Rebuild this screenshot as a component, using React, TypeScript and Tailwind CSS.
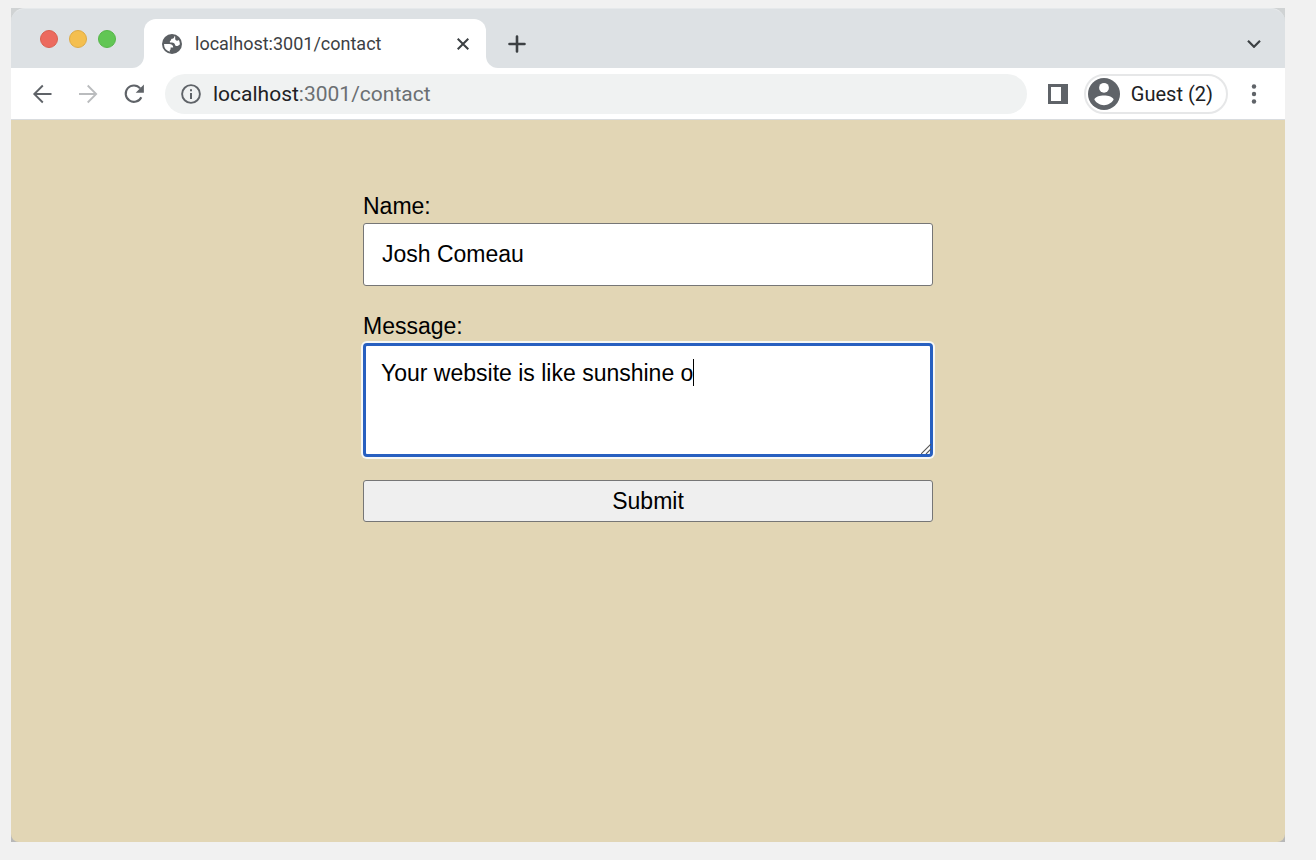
import React, { useState } from "react";

function GlobeIcon() {
  return (
    <svg className="size-5 shrink-0" viewBox="0 0 20 20" aria-hidden="true">
      <circle cx="10" cy="10" r="10" fill="#5b5f63" />
      <path
        d="M2 10h5.200c2.600 0 4 1.300 4 3.500H8.600v1.800c0 .5-.3.8-.8.8v1.600A8 8 0 0 1 2 10Z M12.300 2.300c0 1.700-.7 2.400-2 2.500-.8 0-1.200.3-1.200 1s-.5 1-1.200 1.100v1.700h2c1.900 0 2.900.9 3.200 2.500.1.600.6.900 1.200.9h.9c.8 0 1.400-.4 1.700-1.100l1-.3a8 8 0 0 0-1.100-4.700c-.4.500-1 .800-1.700.8-1.300 0-1.900-.8-1.900-1.900V2.400Z"
        fill="#fff"
      />
    </svg>
  );
}

function BackIcon() {
  return (
    <svg className="size-5" viewBox="0 0 20 20" fill="none" stroke="currentColor" strokeWidth="1.9" aria-hidden="true">
      <path d="M19.500 10H2.500M10.800 1.500 2.300 10l8.500 8.500" />
    </svg>
  );
}

function ForwardIcon() {
  return (
    <svg className="size-5" viewBox="0 0 20 20" fill="none" stroke="currentColor" strokeWidth="1.800" aria-hidden="true">
      <path d="M1 10H18M9.700 1.500l8.500 8.500-8.500 8.500" />
    </svg>
  );
}

function ReloadIcon() {
  return (
    <svg className="size-5" viewBox="0 0 20 20" fill="none" aria-hidden="true">
      <path d="M17.300 13.200A8.200 8.200 0 1 1 16.200 4.400" stroke="currentColor" strokeWidth="2.100" />
      <path d="M19.900.5v8.200h-8.200z" fill="currentColor" />
    </svg>
  );
}

function InfoIcon() {
  return (
    <svg className="size-5 shrink-0" viewBox="0 0 20 20" fill="none" aria-hidden="true">
      <circle cx="10" cy="10" r="8.900" stroke="#5f6368" strokeWidth="1.900" />
      <path d="M9 9h2v6H9zM9 5.200h2v2H9z" fill="#5f6368" />
    </svg>
  );
}

function CloseIcon() {
  return (
    <svg className="size-3" viewBox="0 0 12 12" stroke="currentColor" strokeWidth="2" aria-hidden="true">
      <path d="m.7.700 10.600 10.600M11.300.700.700 11.300" />
    </svg>
  );
}

function PlusIcon() {
  return (
    <svg className="size-[18px]" viewBox="0 0 18 18" stroke="currentColor" strokeWidth="2.600" strokeLinecap="round" aria-hidden="true">
      <path d="M9 1.500v15M1.500 9h15" />
    </svg>
  );
}

function ChevronIcon() {
  return (
    <svg className="h-2 w-[14px]" viewBox="0 0 14 8" fill="none" stroke="currentColor" strokeWidth="2.200" aria-hidden="true">
      <path d="m1 .8 6 6 6-6" />
    </svg>
  );
}

function SidePanelIcon() {
  return (
    <svg className="size-5" viewBox="0 0 20 20" aria-hidden="true">
      <path d="M0 0h20v20H0zM3 3v14h10V3z" fill="#5f6368" fillRule="evenodd" />
    </svg>
  );
}

function AvatarIcon() {
  return (
    <svg className="size-8" viewBox="0 0 32 32" aria-hidden="true">
      <circle cx="16" cy="16" r="16" fill="#5f6368" />
      <circle cx="16" cy="9.800" r="4.900" fill="#fff" />
      <path d="M6.400 21.800C6.400 18.800 12 17.400 16 17.400s9.600 1.400 9.600 4.400c-1.900 3.100-5.400 5.400-9.600 5.400s-7.700-2.300-9.600-5.400Z" fill="#fff" />
    </svg>
  );
}

function MenuIcon() {
  return (
    <svg className="h-5 w-1.5" viewBox="0 0 6 20" fill="#5f6368" aria-hidden="true">
      <circle cx="3" cy="2.500" r="2.200" />
      <circle cx="3" cy="10" r="2.200" />
      <circle cx="3" cy="17.500" r="2.200" />
    </svg>
  );
}

function TabStrip() {
  return (
    <div className="flex h-[60px] items-end rounded-t-[14px] border-t border-[#e6e9eb] bg-[#dde1e4]">
      <div className="flex h-full items-center gap-[11px] pl-[29px]">
        <button type="button" aria-label="Close window" className="size-[18px] rounded-full border border-[#d9604f] bg-[#ec6a5e]" />
        <button type="button" aria-label="Minimize window" className="size-[18px] rounded-full border border-[#deab45] bg-[#f4bf4f]" />
        <button type="button" aria-label="Zoom window" className="size-[18px] rounded-full border border-[#56b649] bg-[#61c654]" />
      </div>
      <div className="h-3 w-7 bg-white">
        <div className="h-full rounded-br-[12px] bg-[#dde1e4]" />
      </div>
      <div className="flex h-[49px] w-[342px] items-center rounded-t-[12px] bg-white pl-[18px] pr-[17px]">
        <GlobeIcon />
        <span className="ml-[13px] flex-1 text-[18px] leading-6 text-[#3c4043]">localhost:3001/contact</span>
        <button type="button" aria-label="Close tab" className="text-[#3c4043]">
          <CloseIcon />
        </button>
      </div>
      <div className="h-3 w-3 bg-white">
        <div className="h-full rounded-bl-[12px] bg-[#dde1e4]" />
      </div>
      <div className="flex h-[49px] flex-1 items-center justify-between pl-2.5 pr-6 text-[#3c4043]">
        <button type="button" aria-label="New tab">
          <PlusIcon />
        </button>
        <button type="button" aria-label="Search tabs">
          <ChevronIcon />
        </button>
      </div>
    </div>
  );
}

function Toolbar() {
  return (
    <div className="flex h-[52px] items-center border-b border-[#d9dcdf] bg-white pl-[21px] pr-7 text-[#5f6368]">
      <div className="flex gap-[26px]">
        <button type="button" aria-label="Back">
          <BackIcon />
        </button>
        <button type="button" aria-label="Forward" className="text-[#babcbe]">
          <ForwardIcon />
        </button>
        <button type="button" aria-label="Reload">
          <ReloadIcon />
        </button>
      </div>
      <div className="ml-[21px] flex h-10 flex-1 items-center gap-3 rounded-full bg-[#f0f2f2] px-4">
        <InfoIcon />
        <a href="#contact" className="text-[21px] leading-7 text-[#6b6f72]">
          <span className="text-[#202124]">localhost</span>:3001/contact
        </a>
      </div>
      <button type="button" aria-label="Side panel" className="ml-[21px]">
        <SidePanelIcon />
      </button>
      <button
        type="button"
        className="ml-4 flex h-10 items-center gap-[11px] rounded-full border-2 border-[#e6e7e8] pl-0.5 pr-[13px] text-[20px] leading-6 text-[#202124]"
      >
        <AvatarIcon />
        Guest (2)
      </button>
      <button type="button" aria-label="Menu" className="ml-[23px]">
        <MenuIcon />
      </button>
    </div>
  );
}

function ContactForm() {
  const [name, setName] = useState("Josh Comeau");
  const [message, setMessage] = useState("Your website is like sunshine o");

  return (
    <form
      id="contact"
      onSubmit={(event: React.FormEvent) => event.preventDefault()}
      className="flex w-full max-w-[570px] flex-col gap-[23px] font-['Liberation_Sans',Arial,sans-serif] text-[23px] text-black"
    >
      <div className="flex flex-col">
        <label htmlFor="name" className="leading-[34px]">
          Name:
        </label>
        <input
          id="name"
          type="text"
          value={name}
          onChange={(event) => setName(event.target.value)}
          className="h-[63px] rounded-[3px] border border-[#767676] bg-white px-[18px]"
        />
      </div>
      <div className="flex flex-col">
        <label htmlFor="message" className="leading-[34px]">
          Message:
        </label>
        <div className="relative flex">
          <textarea
            id="message"
            value={message}
            onChange={(event) => setMessage(event.target.value)}
            className="h-[114px] w-full resize-none rounded-[4px] border-3 border-[#2860c0] bg-white px-[15px] py-[13px] leading-7 shadow-[0_0_0_2px_#f7f8f5] outline-none"
          />
          <span className="absolute left-[330px] top-4 h-[27px] w-px bg-black" />
          <svg className="absolute bottom-[3px] right-0.5 size-2.5" viewBox="0 0 10 10" stroke="#555" strokeWidth="1.100" aria-hidden="true">
            <path d="m0 10 10-10M5 10l5-5" />
          </svg>
        </div>
      </div>
      <button type="submit" className="h-[42px] rounded-[3px] border border-[#767676] bg-[#efefef]">
        Submit
      </button>
    </form>
  );
}

export default function App() {
  return (
    <div className="flex min-h-screen flex-col bg-[#f1f1f1] pb-[18px] pl-[11px] pr-[31px] pt-2 font-[Roboto,sans-serif]">
      <div className="flex flex-1 flex-col bg-linear-to-b from-[#d0d3d4] to-[#b8b8b8]">
        <TabStrip />
        <Toolbar />
        <main className="flex flex-1 justify-center rounded-b-[8px] bg-[#e2d6b5] px-6 pb-12 pt-[69px]">
          <ContactForm />
        </main>
      </div>
    </div>
  );
}
